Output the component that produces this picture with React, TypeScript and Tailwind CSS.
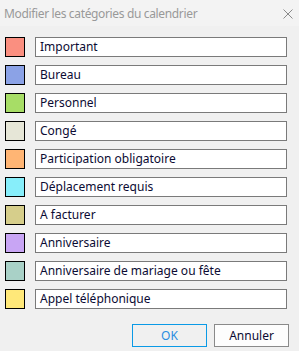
const categories = [
  { name: 'Important', color: '#fa8f80' },
  { name: 'Bureau', color: '#8ba2e6' },
  { name: 'Personnel', color: '#a7dd66' },
  { name: 'Congé', color: '#e6e6d7' },
  { name: 'Participation obligatoire', color: '#ffb574' },
  { name: 'Déplacement requis', color: '#87eefa' },
  { name: 'A facturer', color: '#d6ce8b' },
  { name: 'Anniversaire', color: '#c8a5f4' },
  { name: 'Anniversaire de mariage ou fête', color: '#a9d1c7' },
  { name: 'Appel téléphonique', color: '#ffe879' },
];

export default function App() {
  return (
    <div className="w-[299px] h-[351px] bg-[#f0f0f0] flex flex-col font-['Noto_Sans','Open_Sans',sans-serif] overflow-hidden">
      {/* title bar */}
      <div className="h-[26px] bg-[#f3f3f3] flex items-center justify-between pl-[4px] pr-[6px] pt-[1px]">
        <span className="text-[12px] text-[#999999] leading-none tracking-[-0.35px]">Modifier les catégories du calendrier</span>
        <svg width="10" height="10" viewBox="0 0 10 10">
          <path d="M0.5 0.5 L9.5 9.5 M9.5 0.5 L0.5 9.5" stroke="#8a8a8a" strokeWidth="1" />
        </svg>
      </div>

      <div className="flex flex-col gap-[8px] pt-[11px] pl-[5px] pr-[12px]">
        {categories.map((c) => (
          <div key={c.name} className="flex items-center gap-[10px]">
            <div className="w-[20px] h-[20px] border border-black shrink-0" style={{ backgroundColor: c.color }} />
            <div className="flex-1 h-[20px] bg-white border border-[#7a7a7a] flex items-center pl-[4px]">
              <span className="text-[12px] text-[#0b0b33] leading-none">{c.name}</span>
            </div>
          </div>
        ))}
      </div>

      <div className="flex justify-end gap-[7px] pr-[10px] mt-[15px]">
        <button className="w-[75px] h-[23px] border border-[#0a9ae6] bg-[#f0f0f0] text-[12px] text-[#2b8de0]">OK</button>
        <button className="w-[75px] h-[23px] border border-[#8a8a8a] bg-[#fdfdfd] text-[12px] text-[#0b0b33]">Annuler</button>
      </div>
    </div>
  );
}
